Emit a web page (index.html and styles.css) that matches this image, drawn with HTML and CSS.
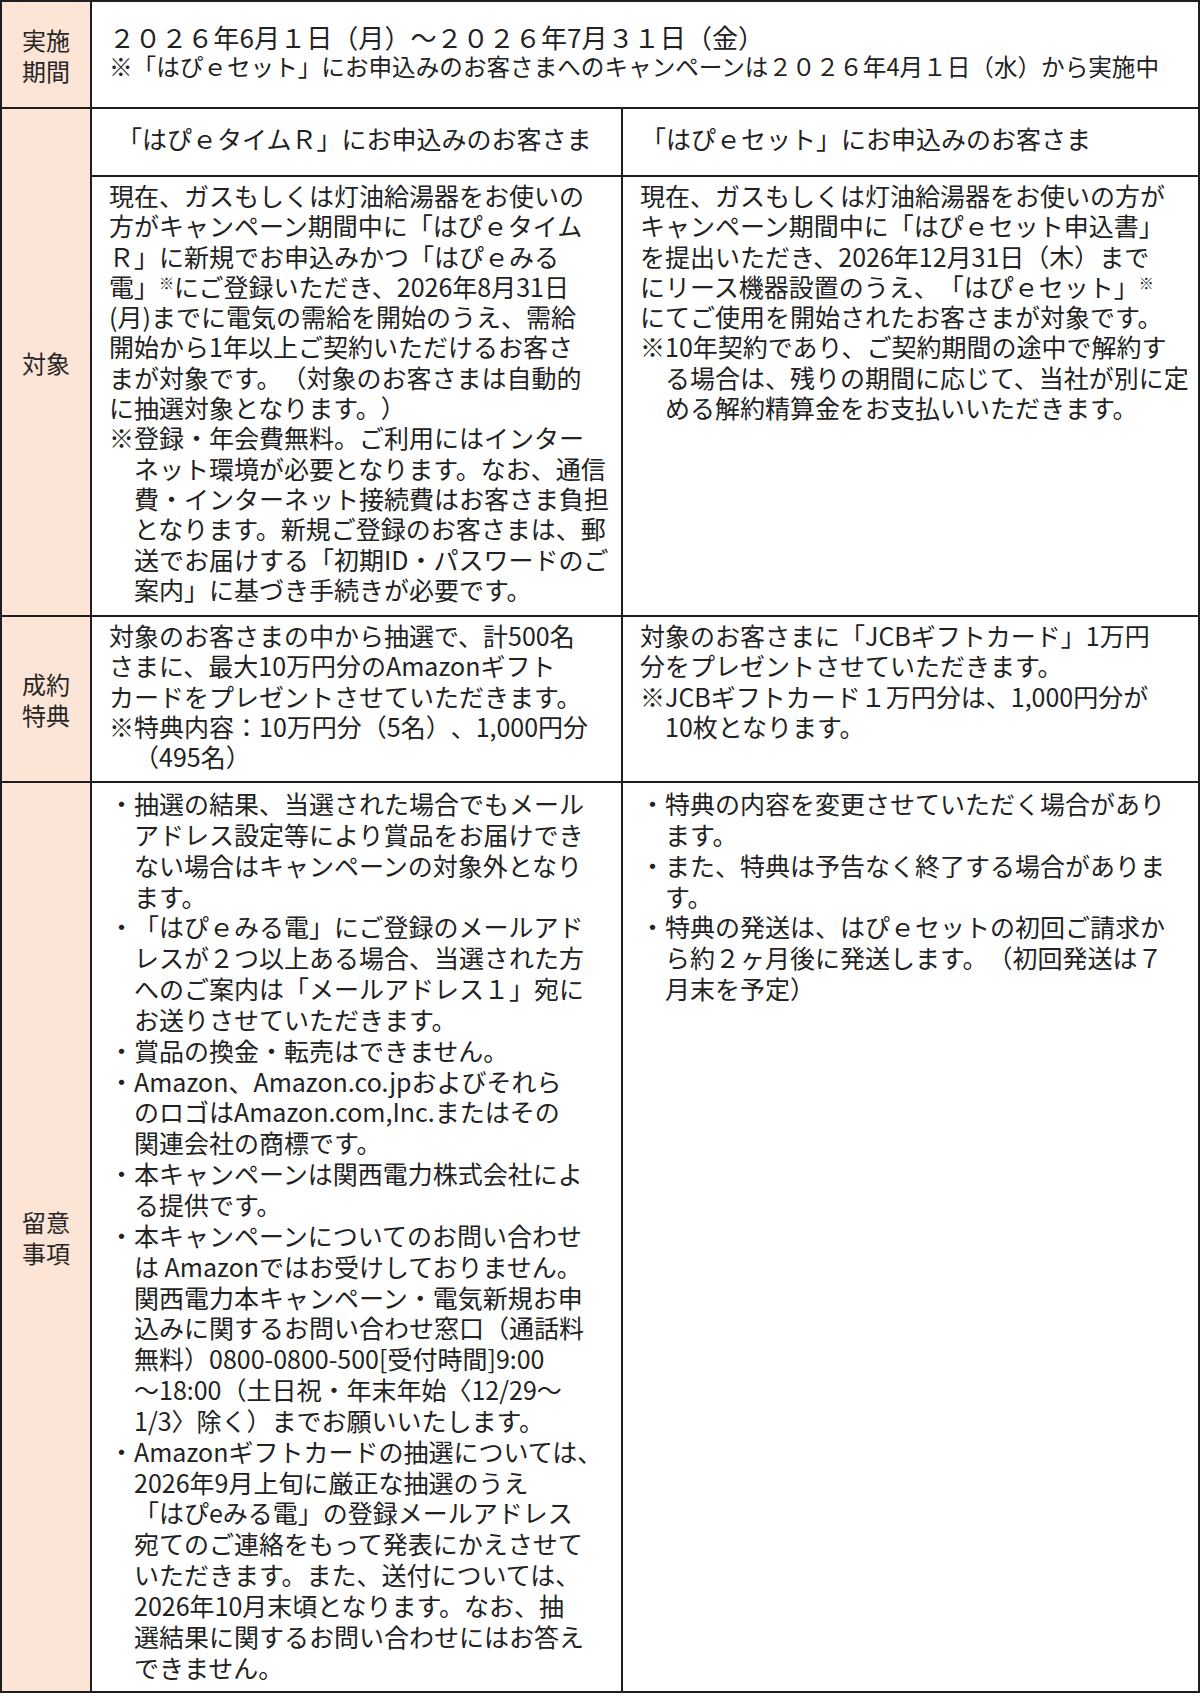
FILE: index.html
```html
<!DOCTYPE html>
<html lang="ja">
<head>
<meta charset="utf-8">
<title>キャンペーン概要</title>
<link rel="stylesheet" href="styles.css">
</head>
<body>
<table class="campaign">
  <colgroup>
    <col class="c-label">
    <col class="c-left">
    <col class="c-right">
  </colgroup>
  <tr class="r-period">
    <th class="label">実施<br>期間</th>
    <td class="period" colspan="2">
      <p class="period-main">２０２６年6月１日（月）～２０２６年7月３１日（金）</p>
      <p class="period-note">※「はぴｅセット」にお申込みのお客さまへのキャンペーンは２０２６年4月１日（水）から実施中</p>
    </td>
  </tr>
  <tr class="r-head">
    <th class="label" rowspan="2">対象</th>
    <td class="head head-left">「はぴｅタイムＲ」にお申込みのお客さま</td>
    <td class="head head-right">「はぴｅセット」にお申込みのお客さま</td>
  </tr>
  <tr class="r-target">
    <td class="body">
      <p>現在、ガスもしくは灯油給湯器をお使いの<br>方がキャンペーン期間中に「はぴｅタイム<br>Ｒ」に新規でお申込みかつ「はぴｅみる<br>電」<span class="sup">※</span>にご登録いただき、2026年8月31日<br>(月)までに電気の需給を開始のうえ、需給<br>開始から1年以上ご契約いただけるお客さ<br>まが対象です。（対象のお客さまは自動的<br>に抽選対象となります。）</p>
      <p class="hang">※登録・年会費無料。ご利用にはインター<br>ネット環境が必要となります。なお、通信<br>費・インターネット接続費はお客さま負担<br>となります。新規ご登録のお客さまは、郵<br>送でお届けする「初期ID・パスワードのご<br>案内」に基づき手続きが必要です。</p>
    </td>
    <td class="body">
      <p>現在、ガスもしくは灯油給湯器をお使いの方が<br>キャンペーン期間中に「はぴｅセット申込書」<br>を提出いただき、2026年12月31日（木）まで<br>にリース機器設置のうえ、「はぴｅセット」<span class="sup">※</span><br>にてご使用を開始されたお客さまが対象です。</p>
      <p class="hang">※10年契約であり、ご契約期間の途中で解約す<br>る場合は、残りの期間に応じて、当社が別に定<br>める解約精算金をお支払いいただきます。</p>
    </td>
  </tr>
  <tr class="r-benefit">
    <th class="label">成約<br>特典</th>
    <td class="body">
      <p>対象のお客さまの中から抽選で、計500名<br>さまに、最大10万円分のAmazonギフト<br>カードをプレゼントさせていただきます。</p>
      <p class="hang">※特典内容：10万円分（5名）、1,000円分<br>（495名）</p>
    </td>
    <td class="body">
      <p>対象のお客さまに「JCBギフトカード」1万円<br>分をプレゼントさせていただきます。</p>
      <p class="hang">※JCBギフトカード１万円分は、1,000円分が<br>10枚となります。</p>
    </td>
  </tr>
  <tr class="r-notes">
    <th class="label">留意<br>事項</th>
    <td class="body notes">
      <ul class="bullets">
        <li>抽選の結果、当選された場合でもメール<br>アドレス設定等により賞品をお届けでき<br>ない場合はキャンペーンの対象外となり<br>ます。</li>
        <li>「はぴｅみる電」にご登録のメールアド<br>レスが２つ以上ある場合、当選された方<br>へのご案内は「メールアドレス１」宛に<br>お送りさせていただきます。</li>
        <li>賞品の換金・転売はできません。</li>
        <li>Amazon、Amazon.co.jpおよびそれら<br>のロゴはAmazon.com,Inc.またはその<br>関連会社の商標です。</li>
        <li>本キャンペーンは関西電力株式会社によ<br>る提供です。</li>
        <li>本キャンペーンについてのお問い合わせ<br>は Amazonではお受けしておりません。<br>関西電力本キャンペーン・電気新規お申<br>込みに関するお問い合わせ窓口（通話料<br>無料）0800-0800-500[受付時間]9:00<br>～18:00（土日祝・年末年始〈12/29～<br>1/3〉除く）までお願いいたします。</li>
        <li>Amazonギフトカードの抽選については、<br>2026年9月上旬に厳正な抽選のうえ<br>「はぴeみる電」の登録メールアドレス<br>宛てのご連絡をもって発表にかえさせて<br>いただきます。また、送付については、<br>2026年10月末頃となります。なお、抽<br>選結果に関するお問い合わせにはお答え<br>できません。</li>
      </ul>
    </td>
    <td class="body notes">
      <ul class="bullets">
        <li>特典の内容を変更させていただく場合があり<br>ます。</li>
        <li>また、特典は予告なく終了する場合がありま<br>す。</li>
        <li>特典の発送は、はぴｅセットの初回ご請求か<br>ら約２ヶ月後に発送します。（初回発送は７<br>月末を予定）</li>
      </ul>
    </td>
  </tr>
</table>
</body>
</html>
```
FILE: styles.css
```css
html, body {
  margin: 0;
  padding: 0;
  background: #ffffff;
}

body {
  font-family: "Noto Sans CJK JP", "Noto Sans", sans-serif;
  color: #222222;
  font-size: 25px;
  line-height: 30.3px;
  text-spacing-trim: space-all;
}

p, ul {
  margin: 0;
  padding: 0;
}

.campaign {
  border-collapse: collapse;
  table-layout: fixed;
  width: 1198px;
}

.campaign th,
.campaign td {
  border: 2px solid #1e1e1e;
  padding: 0;
  vertical-align: top;
  text-align: left;
  font-weight: normal;
  white-space: nowrap;
}

.c-label { width: 90px; }
.c-left { width: 531px; }
.c-right { width: 577px; }

.label {
  background: #fce4d6;
  text-align: center !important;
  vertical-align: middle !important;
  font-size: 24px;
  line-height: 31px;
  color: #262626;
}

.r-period { height: 107px; }
.r-head { height: 68px; }
.r-target { height: 440px; }
.r-benefit { height: 166px; }
.r-notes { height: 910px; }

.period {
  padding: 20px 0 0 17px !important;
}

.period-main {
  font-size: 26.1px;
  line-height: 30px;
}

.period-note {
  font-size: 23.6px;
  line-height: 28px;
}

.head {
  vertical-align: middle !important;
  padding-bottom: 8px !important;
}

.head-left { padding-left: 25px !important; }
.head-right { padding-left: 18px !important; }

.body {
  padding: 3px 0 0 17px !important;
}

.notes {
  padding-top: 5px !important;
  line-height: 30.85px;
}

.hang {
  padding-left: 1em;
  text-indent: -1em;
}

.sup {
  font-size: 0.6em;
  vertical-align: 0.55em;
  line-height: 0;
}

.bullets {
  list-style: none;
}

.bullets li {
  padding-left: 1em;
  text-indent: -1em;
}

.bullets li::before {
  content: "・";
}
```
